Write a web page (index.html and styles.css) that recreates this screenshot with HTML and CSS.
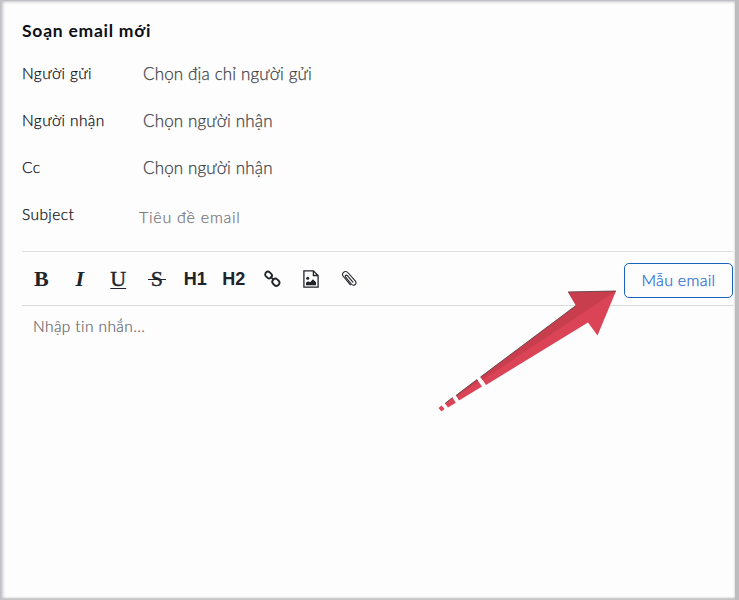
FILE: index.html
```html
<!DOCTYPE html>
<html lang="vi">
<head>
<meta charset="utf-8">
<title>Soạn email mới</title>
<link rel="stylesheet" href="styles.css">
</head>
<body>
<main class="composer">
  <h1 class="title"><span>Soạn email mới</span></h1>
  <div class="field"><span class="label">Người gửi</span><span class="value">Chọn địa chỉ người gửi</span></div>
  <div class="field"><span class="label">Người nhận</span><span class="value">Chọn người nhận</span></div>
  <div class="field"><span class="label">Cc</span><span class="value">Chọn người nhận</span></div>
  <div class="field"><span class="label">Subject</span><span class="value hint">Tiêu đề email</span></div>
  <div class="toolbar">
    <div class="tools">
      <span class="tool serif">B</span>
      <span class="tool serif italic">I</span>
      <span class="tool serif under">U</span>
      <span class="tool serif strike">S</span>
      <span class="tool heading">H1</span>
      <span class="tool heading">H2</span>
      <span class="tool"><svg width="18" height="18" viewBox="0 0 18 18" fill="none" stroke="#20242a" stroke-width="1.9"><rect x="1.9" y="2.2" width="7.2" height="5.4" rx="2.7" transform="rotate(43 5.4 5)"/><rect x="9.2" y="9.2" width="7.4" height="6" rx="3" transform="rotate(43 12.8 12.2)"/><path d="M7.500 6.500l3 3.400" stroke-width="1.7"/></svg></span>
      <span class="tool"><svg width="18" height="20" viewBox="0 0 18 20" fill="none" stroke="#20242a" stroke-width="1.3"><path d="M1.900 1.900h9.500l4.700 4.600v11.600H1.900zM11.400 1.900v4.600h4.700"/><path d="M4 16.200v-2.500l2-1.500 2 1 3-3 3 3v3z" fill="#20242a" stroke="none"/><circle cx="5.700" cy="9.300" r="1.500" fill="#20242a" stroke="none"/></svg></span>
      <span class="tool"><svg width="18" height="18" viewBox="0 0 18 18" fill="none" stroke="#20242a" stroke-width="1.1" stroke-linecap="round"><path d="M5.700 7.200l5.600 6.800c1.100 1.300 2.700 1.400 3.800.5 1.100-1 1.100-2.500.1-3.700L8.300 3C6.900 1.400 4.800 1.300 3.500 2.400c-1.200 1.100-1.200 2.800-.1 4.100l7 8.300M12.900 12.200L7.400 5.700c-.6-.7-1.300-.7-1.800-.2s-.5 1.100.1 1.700"/></svg></span>
    </div>
    <button class="template" type="button"><span>Mẫu email</span></button>
  </div>
  <div class="message"><span>Nhập tin nhắn...</span></div>
</main>
<svg class="arrow" width="190" height="130" viewBox="430 285 190 130">
  <path fill="#db4456" d="M568 292L616 291L597.500 335.500L588 322.500L486 385L480.500 377L576 305.500zM477 379.500L482 386.500L459 400.500L456 395.500zM452.500 397.500L455.800 402.700L448 407.500L445 403.500zM441.500 405.500L444.500 409L441.500 411.500L438.500 408z"/>
  <path fill="#c93e4d" d="M568 292L616 291L482.500 380L480.500 377L576 305.500zM477 379.500L478.500 381.500L457 396.500L456 395.500z"/>
  <path stroke="#5c4a4d" stroke-width=".9" fill="none" d="M568 292L616 291M576 305.500L480.500 377M477 379.500L456 395.500M452.500 397.500L445 403.500"/>
</svg>
<div class="frame"></div>
</body>
</html>
```
FILE: styles.css
```css
* { box-sizing: border-box; }
html, body { margin: 0; height: 600px; overflow: hidden; }
body { background: #fdfdfd; color: #0c0f16; font: 300 15px/20px Lato, "Noto Sans", sans-serif; }
.composer { height: 600px; padding: 8px 6px 0 22px; display: flex; flex-direction: column; }
.title { margin: 0; height: 42px; padding-top: 13px; font-size: 17.500px; line-height: 20px; font-weight: 700; letter-spacing: .75px; white-space: nowrap; }
.field { height: 47px; display: flex; align-items: center; white-space: nowrap; }
.label { width: 121px; flex: none; font-size: 15.500px; letter-spacing: .4px; margin-top: -1px; -webkit-text-stroke: .25px; }
.value { color: #404247; font-size: 17px; letter-spacing: .15px; -webkit-text-stroke: .25px; }
.hint { color: #75777c; font-size: 16px; margin: 5px 0 0 -4px; letter-spacing: .75px; }
.toolbar { height: 55px; margin-top: 13px; border-top: 1px solid #ddddde; border-bottom: 1px solid #d9d9da; display: flex; align-items: center; justify-content: space-between; }
.tools { display: flex; }
.tool { width: 38.500px; height: 24px; display: flex; align-items: center; justify-content: center; color: #20242a; }
.serif { font: 700 22px/24px "Liberation Serif", serif; }
.italic { font-style: italic; }
.under { font-weight: 400; text-decoration: underline; text-decoration-thickness: 1px; text-underline-offset: 2px; -webkit-text-stroke: .4px; }
.strike { position: relative; font-weight: 400; -webkit-text-stroke: .4px; }
.strike::after { content: ""; position: absolute; left: 10px; top: 12px; width: 18px; height: 1px; background: #20242a; }
.heading { font: 700 18px/24px "Liberation Sans", sans-serif; }
.template { width: 109px; height: 35px; margin-top: 3px; padding: 0; background: transparent; border: 1px solid #1763bd; border-radius: 5px; color: #286bd6; font: 300 16px/20px Lato, "Noto Sans", sans-serif; letter-spacing: .3px; -webkit-text-stroke: .25px; }
.message { padding: 10px 11px; color: #62646b; font-size: 15.500px; white-space: nowrap; letter-spacing: .4px; -webkit-text-stroke: .2px; }
.arrow { position: absolute; left: 430px; top: 285px; }
.frame { position: absolute; inset: 0; pointer-events: none; border-right: 4px solid #bdbdbf; box-shadow: inset 1px 1px 0 #bfbfc5, inset 2px 1px 3px 1px #c5c5ca, inset 0 -2px 2px #c0c0c3; }
```
